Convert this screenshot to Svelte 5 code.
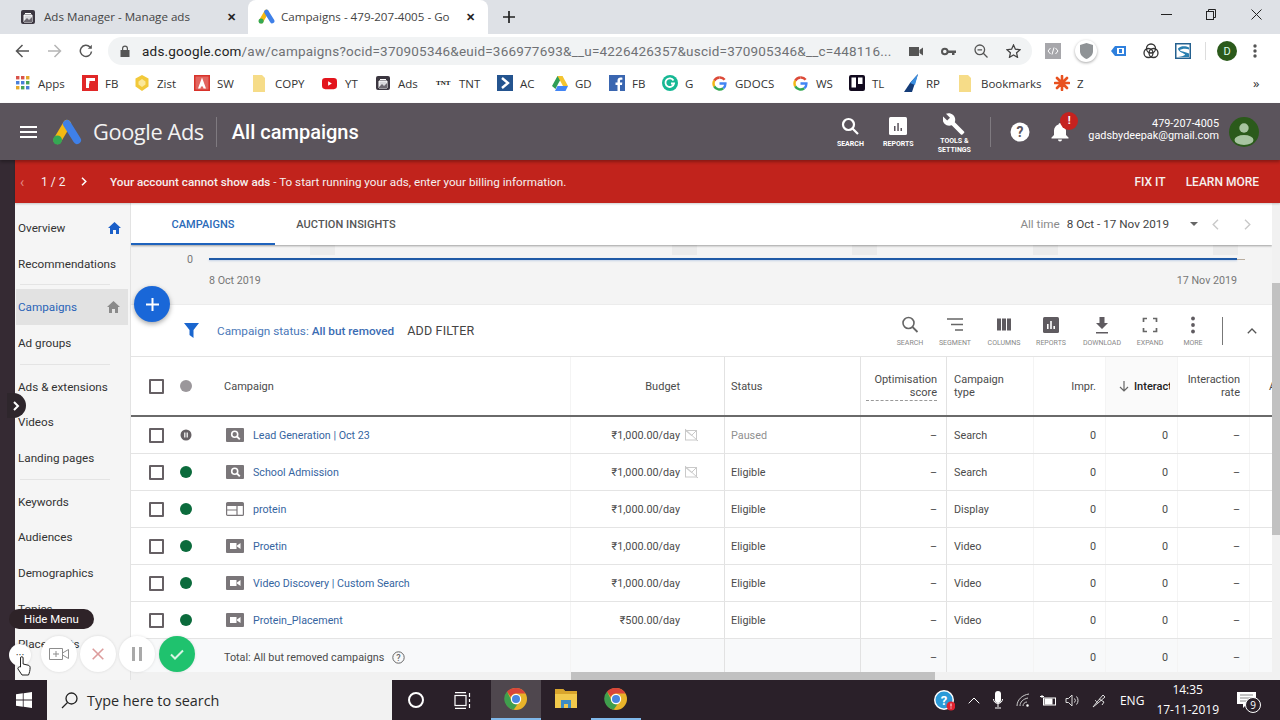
<script>
  const bookmarks = [
    { k: 'apps', t: 'Apps', w: 67 }, { k: 'flip', t: 'FB', w: 52 }, { k: 'zist', t: 'Zist', w: 60 },
    { k: 'sw', t: 'SW', w: 58 }, { k: 'folder', t: 'COPY', w: 70 }, { k: 'yt', t: 'YT', w: 53 },
    { k: 'ads', t: 'Ads', w: 61 }, { k: 'tnt', t: 'TNT', w: 61 }, { k: 'ac', t: 'AC', w: 55 },
    { k: 'gd', t: 'GD', w: 57 }, { k: 'fb', t: 'FB', w: 53 }, { k: 'gram', t: 'G', w: 50 },
    { k: 'g', t: 'GDOCS', w: 81 }, { k: 'g', t: 'WS', w: 56 }, { k: 'trello', t: 'TL', w: 54 },
    { k: 'rp', t: 'RP', w: 55 }, { k: 'folder', t: 'Bookmarks', w: 96 }, { k: 'z', t: 'Z', w: 40 }
  ];
  const nav = [
    { t: 'Overview', home: 'blue' }, { t: 'Recommendations' }, { sep: true },
    { t: 'Campaigns', home: 'gray', active: true }, { t: 'Ad groups' }, { sep: true },
    { t: 'Ads & extensions' }, { t: 'Videos' }, { t: 'Landing pages' }, { sep: true },
    { t: 'Keywords' }, { t: 'Audiences' }, { t: 'Demographics' }, { t: 'Topics' }, { t: 'Placements' }
  ];
  const tools = [
    { k: 'search', t: 'SEARCH', w: 40 }, { k: 'segment', t: 'SEGMENT', w: 50 }, { k: 'columns', t: 'COLUMNS', w: 48 },
    { k: 'reports', t: 'REPORTS', w: 46 }, { k: 'download', t: 'DOWNLOAD', w: 56 }, { k: 'expand', t: 'EXPAND', w: 40 }, { k: 'more', t: 'MORE', w: 46 }
  ];
  const rows = [
    { n: 'Lead Generation | Oct 23', b: '₹1,000.00/day', s: 'Paused', ty: 'Search', ic: 'search', paused: true, warn: true },
    { n: 'School Admission', b: '₹1,000.00/day', s: 'Eligible', ty: 'Search', ic: 'search', warn: true },
    { n: 'protein', b: '₹1,000.00/day', s: 'Eligible', ty: 'Display', ic: 'display' },
    { n: 'Proetin', b: '₹1,000.00/day', s: 'Eligible', ty: 'Video', ic: 'video' },
    { n: 'Video Discovery | Custom Search', b: '₹1,000.00/day', s: 'Eligible', ty: 'Video', ic: 'video' },
    { n: 'Protein_Placement', b: '₹500.00/day', s: 'Eligible', ty: 'Video', ic: 'video' }
  ];
</script>

{#snippet chrome()}
  <svg width="24" height="24" viewBox="0 0 24 24">
    <circle cx="12" cy="12" r="11" fill="#e8b32a"/>
    <path d="M12 1a11 11 0 0 1 9.53 5.5H12a5.5 5.5 0 0 0-5.2 3.6L3 4.6A11 11 0 0 1 12 1z" fill="#d9453a"/>
    <path d="M3 4.6l3.9 7.6a5.5 5.5 0 0 0 6.6 5.1L9.6 22.7A11 11 0 0 1 3 4.6z" fill="#3f9e4d"/>
    <circle cx="12" cy="12" r="5.2" fill="#fff"/><circle cx="12" cy="12" r="4" fill="#4a86e0"/>
  </svg>
{/snippet}

{#snippet adsLogo(w, h)}
  <svg width={w} height={h} viewBox="0 0 30 26">
    <path d="M15 5L5.5 21" stroke="#f4b912" stroke-width="8" stroke-linecap="round"/>
    <path d="M15 5l10 16" stroke="#3f80e8" stroke-width="8" stroke-linecap="round"/>
    <circle cx="5.5" cy="21" r="4.5" fill="#34a853"/>
  </svg>
{/snippet}

{#snippet bag()}
  <svg width="16" height="16" viewBox="0 0 16 16">
    <rect x="1" y="1" width="14" height="14" rx="2" fill="#3b3640"/>
    <path d="M5 4.5h6M4 6h8v7H4z" stroke="#fff" fill="#d8d8dc"/><path d="M4 12l3-3 2 2 3-3v5H4z" fill="#6c6870"/>
  </svg>
{/snippet}

{#snippet gLogo()}
  <svg width="15" height="15" viewBox="0 0 16 16" fill="none" stroke-width="2.6">
    <path d="M13.5 4A6.4 6.4 0 0 0 8 1.6" stroke="#dc4a38"/><path d="M8 1.6A6.4 6.4 0 0 0 2.4 5" stroke="#dc4a38"/>
    <path d="M2.4 5a6.4 6.4 0 0 0 0 6" stroke="#f2b715"/><path d="M2.4 11A6.4 6.4 0 0 0 12 13" stroke="#34a853"/>
    <path d="M12 13a6 6 0 0 0 2.3-5H8" stroke="#4285f4"/>
  </svg>
{/snippet}

{#snippet bm(k)}
  {#if k === 'apps'}
    <svg width="16" height="16" viewBox="0 0 16 16">
      <g fill="#d9534a"><rect x="1" y="1" width="3.4" height="3.4"/><rect x="6" y="1" width="3.4" height="3.4"/></g><rect x="11" y="1" width="3.4" height="3.4" fill="#e5a92c"/>
      <g fill="#4a80d8"><rect x="1" y="6" width="3.4" height="3.4"/><rect x="6" y="6" width="3.4" height="3.4"/></g><rect x="11" y="6" width="3.4" height="3.4" fill="#48a257"/>
      <g fill="#e5a92c"><rect x="1" y="11" width="3.4" height="3.4"/></g><rect x="6" y="11" width="3.4" height="3.4" fill="#48a257"/><rect x="11" y="11" width="3.4" height="3.4" fill="#4a80d8"/>
    </svg>
  {:else if k === 'flip'}
    <svg width="16" height="16" viewBox="0 0 16 16"><rect width="16" height="16" fill="#e12828"/><path d="M4 3h9v3H7.500v2.500H7V13H4z" fill="#fff"/></svg>
  {:else if k === 'zist'}
    <svg width="16" height="16" viewBox="0 0 16 16"><path d="M8 0l6.500 3.500v8L8 16l-6.500-4.500v-8z" fill="#f2c93a"/><path d="M8 4l3.500 2.500v3L8 12 4.500 9.500v-3z" fill="#fbe89a"/></svg>
  {:else if k === 'sw'}
    <svg width="16" height="16" viewBox="0 0 16 16"><rect width="16" height="16" fill="#d8322a"/><rect x="1.500" y="1.500" width="13" height="13" fill="#fff" opacity=".25"/><path d="M8 2.500l4 11h-2.500l-.6-2H7l-.6 2H4z" fill="#fff"/></svg>
  {:else if k === 'folder'}
    <svg width="14" height="17" viewBox="0 0 14 17"><path d="M1 0h9l3 3v14H1z" fill="#f6dc88"/></svg>
  {:else if k === 'yt'}
    <svg width="15" height="15" viewBox="0 0 16 16"><rect y="2" width="16" height="12" rx="3.500" fill="#e3141c"/><path d="M6.500 5.500l4 2.500-4 2.500z" fill="#fff"/></svg>
  {:else if k === 'ads'}
    {@render bag()}
  {:else if k === 'tnt'}
    <span class="tnt">TNT</span>
  {:else if k === 'ac'}
    <svg width="16" height="16" viewBox="0 0 16 16"><rect width="16" height="16" fill="#24548f"/><path d="M5 3l6 5-6 5" fill="none" stroke="#fff" stroke-width="2.400"/></svg>
  {:else if k === 'gd'}
    <svg width="16" height="15" viewBox="0 0 16 15"><path d="M5.500 0h5L6 8 3.500 13 0 10z" fill="#2f9e57"/><path d="M5.500 0h5L16 10h-5z" fill="#f4c430"/><path d="M3 15l2.500-5H16l-2.500 5z" fill="#4285f4"/></svg>
  {:else if k === 'fb'}
    <svg width="16" height="16" viewBox="0 0 16 16"><rect width="16" height="16" fill="#3a66b0"/><path d="M11 16v-6h2l.3-2.400H11V6c0-.8.300-1.200 1.200-1.200h1.200V2.700C13 2.600 12.300 2.600 11.600 2.600 9.800 2.600 8.500 3.700 8.500 5.800v1.800h-2V10h2v6z" fill="#fff"/></svg>
  {:else if k === 'gram'}
    <svg width="16" height="16" viewBox="0 0 16 16"><circle cx="8" cy="8" r="8" fill="#16b894"/><path d="M11.500 5.500A4.300 4.300 0 1 0 12 8.500H9" fill="none" stroke="#fff" stroke-width="1.800"/></svg>
  {:else if k === 'g'}
    {@render gLogo()}
  {:else if k === 'trello'}
    <svg width="16" height="16" viewBox="0 0 16 16"><rect width="16" height="16" rx="2" fill="#120a1e"/><rect x="2.500" y="2.500" width="4.500" height="10" fill="#fff"/><rect x="9" y="2.500" width="4.500" height="6.500" fill="#fff"/></svg>
  {:else if k === 'rp'}
    <svg width="16" height="18" viewBox="0 0 16 18"><path d="M15 0L7 9l-6 9h8z" fill="#143c78"/><path d="M15 0L7 9l5 2z" fill="#3b8ee0"/></svg>
  {:else}
    <svg width="16" height="16" viewBox="0 0 16 16" stroke="#e8511f" stroke-width="2.600" stroke-linecap="round"><path d="M8 1v14M1 8h14M3 3l10 10M13 3L3 13"/></svg>
  {/if}
{/snippet}

{#snippet tool(k)}
  <svg width="20" height="20" viewBox="0 0 20 20" class="tool-ic">
    {#if k === 'search'}
      <circle cx="8.500" cy="8" r="5.500" fill="none" stroke="#666" stroke-width="1.600"/><path d="M12.500 12l5 5" stroke="#666" stroke-width="1.800"/>
    {:else if k === 'segment'}
      <path d="M2 4h16M6 9.500h12M10 15h8" stroke="#666" stroke-width="1.700"/>
    {:else if k === 'columns'}
      <path d="M3 3.500h4v12H3zM8 3.500h4v12H8zM13 3.500h4v12h-4z" fill="#5f5b60"/>
    {:else if k === 'reports'}
      <rect x="2" y="2" width="16" height="16" rx="1.500" fill="#5f5b60"/><path d="M6 9v5h1.600V9zM9.200 6v8h1.600V6zM12.400 11v3H14v-3z" fill="#fff"/>
    {:else if k === 'download'}
      <path d="M7.500 2h5v6h3.500L10 14 4 8h3.500zM4 17h12v1.500H4z" fill="#5f5b60"/>
    {:else if k === 'expand'}
      <path d="M3.500 7V3.500H7M13 3.500h3.500V7M16.500 13v3.500H13M7 16.500H3.500V13" fill="none" stroke="#666" stroke-width="1.700"/>
    {:else}
      <circle cx="10" cy="3.500" r="1.900" fill="#5f5b60"/><circle cx="10" cy="10" r="1.900" fill="#5f5b60"/><circle cx="10" cy="16.500" r="1.900" fill="#5f5b60"/>
    {/if}
  </svg>
{/snippet}

{#snippet typeIcon(k)}
  <svg width="18" height="14" viewBox="0 0 18 14">
    {#if k === 'search'}
      <rect width="18" height="14" rx="1" fill="#7a7679"/><circle cx="8.700" cy="6.300" r="3" fill="none" stroke="#fff" stroke-width="1.600"/><path d="M11 8.500l2.800 2.800" stroke="#fff" stroke-width="1.800"/>
    {:else if k === 'display'}
      <rect x=".6" y=".6" width="16.800" height="12.800" rx="1" fill="#fff" stroke="#7a7679" stroke-width="1.200"/><path d="M1 1h16v3H1z" fill="#7a7679"/><path d="M1 8h10M11 4v9" stroke="#7a7679" stroke-width="1.200"/>
    {:else}
      <rect width="18" height="14" rx="1" fill="#7a7679"/><path d="M4 4h6.500v6H4zM11 6.500L14.500 4v6L11 7.500z" fill="#fff"/>
    {/if}
  </svg>
{/snippet}

{#snippet home(c)}
  <svg width="13" height="12" viewBox="0 0 13 12"><path d="M6.500 0L13 6h-2v6H8V8H5v4H2V6H0z" fill={c}/></svg>
{/snippet}

<div class="page">
  <div class="tabstrip">
    <div class="tab">
      {@render bag()}
      <span class="tab-title">Ads Manager - Manage ads</span>
      <span class="x">✕</span>
    </div>
    <div class="tab active">
      {@render adsLogo(17, 15)}
      <span class="tab-title clip">Campaigns - 479-207-4005 - Go</span>
      <span class="x">✕</span>
    </div>
    <svg class="plus" width="12" height="12" viewBox="0 0 12 12"><path d="M6 0v12M0 6h12" stroke="#222" stroke-width="1.700"/></svg>
    <div class="winctl">
      <svg width="11" height="11" viewBox="0 0 11 11"><path d="M0 5.500h11" stroke="#222"/></svg>
      <svg width="11" height="11" viewBox="0 0 11 11" fill="none" stroke="#222"><rect x=".5" y="2.500" width="7" height="8"/><path d="M2.500 2.500V.5h7v8h-2"/></svg>
      <svg width="11" height="11" viewBox="0 0 11 11"><path d="M.5.500l10 10M10.500.5l-10 10" stroke="#222"/></svg>
    </div>
  </div>

  <div class="toolbar">
    <svg class="tb1" width="14" height="14" viewBox="0 0 14 14" fill="none" stroke="#555" stroke-width="1.500"><path d="M14 7H1.500M7.500 1l-6 6 6 6"/></svg>
    <svg class="tb2" width="14" height="14" viewBox="0 0 14 14" fill="none" stroke="#b5b5b5" stroke-width="1.500"><path d="M0 7h12.500M6.500 1l6 6-6 6"/></svg>
    <svg class="tb3" width="14" height="14" viewBox="0 0 14 14" fill="none" stroke="#555" stroke-width="1.500"><path d="M12.500 7.500A5.600 5.600 0 1 1 11 3"/><path d="M12.800 .8v4h-4" fill="#555" stroke="none"/></svg>
    <div class="omnibox">
      <svg width="10" height="12" viewBox="0 0 10 12"><path d="M2 5V3.500a3 3 0 0 1 6 0V5h1.500v7h-9V5zM3.200 5h3.600V3.500a1.800 1.800 0 0 0-3.600 0z" fill="#555"/></svg>
      <span class="url"><b>ads.google.com</b>/aw/campaigns?ocid=370905346&amp;euid=366977693&amp;__u=4226426357&amp;uscid=370905346&amp;__c=448116...</span>
      <div class="omni-icons">
        <svg width="14" height="11" viewBox="0 0 14 11"><path d="M0 1h10v9H0zM10.500 4L14 1.500v8L10.500 7z" fill="#555"/></svg>
        <svg width="15" height="9" viewBox="0 0 15 9"><circle cx="3.800" cy="4.500" r="2.800" fill="none" stroke="#555" stroke-width="2"/><path d="M6.500 3.500H15V6h-1.500v2H11V6H6.500z" fill="#555"/></svg>
        <svg width="14" height="14" viewBox="0 0 14 14" fill="none" stroke="#555" stroke-width="1.300"><circle cx="5.800" cy="5.800" r="4.800"/><path d="M9.300 9.300L13.500 13.500M3.500 5.800h4.600"/></svg>
        <svg width="15" height="14" viewBox="0 0 15 14"><path d="M7.500 1l1.900 4.200 4.600.5-3.400 3.100.9 4.500-4-2.300-4 2.300.9-4.500L1 5.700l4.600-.5z" fill="none" stroke="#444" stroke-width="1.300"/></svg>
      </div>
    </div>
    <div class="ext">
      <svg width="16" height="16" viewBox="0 0 16 16"><rect width="16" height="16" fill="#a7a7ab"/><path d="M5.500 5L3 8l2.500 3M10.500 5L13 8l-2.500 3M9 4.500l-2 7" fill="none" stroke="#fff"/></svg>
      <span class="shield"><svg width="13" height="16" viewBox="0 0 13 16"><path d="M6.500 0L13 2v6c0 4-3 6.500-6.500 8C3 14.500 0 12 0 8V2z" fill="#8f9396"/></svg></span>
      <svg width="16" height="14" viewBox="0 0 16 14"><path d="M0 7l4-5h11v10H4z" fill="#2f80dd"/><rect x="6" y="4" width="7" height="6" fill="#fff"/><path d="M8 5h3v4H8z" fill="#2f80dd"/></svg>
      <svg width="16" height="16" viewBox="0 0 16 16" fill="none" stroke="#333" stroke-width="1.300"><circle cx="8" cy="5.500" r="4.500"/><circle cx="5.500" cy="10" r="4.500"/><circle cx="10.500" cy="10" r="4.500"/></svg>
      <svg width="16" height="16" viewBox="0 0 16 16"><rect width="16" height="16" fill="#24608f"/><rect x="1.500" y="1.500" width="13" height="13" fill="#fff"/><path d="M3 5.500C6 2.500 11 3 14 4.500v2C11 5 6 6 5 7s6 2 9 3.500V14H3c4-.5 7-1.500 7-2.500S3 9 3 5.500z" fill="#2a7fb0"/></svg>
      <i class="vline"></i>
      <span class="avatar-d">D</span>
      <svg width="4" height="14" viewBox="0 0 4 14"><circle cx="2" cy="2" r="1.700" fill="#555"/><circle cx="2" cy="7" r="1.700" fill="#555"/><circle cx="2" cy="12" r="1.700" fill="#555"/></svg>
    </div>
  </div>

  <div class="bookmarks">
    {#each bookmarks as b}
      <div class="bm" style="width:{b.w}px">
        <span class="bm-ic">{@render bm(b.k)}</span>
        <span>{b.t}</span>
      </div>
    {/each}
    <span class="bm-more">»</span>
  </div>

  <header class="adsbar">
    <svg class="burger" width="17" height="12" viewBox="0 0 17 12"><path d="M0 1h17M0 6h17M0 11h17" stroke="#fff" stroke-width="2"/></svg>
    <span class="logo">{@render adsLogo(30, 26)}</span>
    <span class="brand">Google Ads</span>
    <i class="brand-sep"></i>
    <span class="page-title">All campaigns</span>
    <div class="hdr-right">
      <div class="hdr-btn">
        <svg width="18" height="18" viewBox="0 0 18 18" fill="none" stroke="#fff" stroke-width="2.200"><circle cx="7.500" cy="7.500" r="5.500"/><path d="M11.500 11.500l5.500 5.500"/></svg>
        <span>SEARCH</span>
      </div>
      <div class="hdr-btn">
        <svg width="18" height="18" viewBox="0 0 18 18"><rect width="18" height="18" rx="1.500" fill="#fff"/><path d="M5 9v5h1.500V9zM8.300 6v8h1.500V6zM11.500 11v3H13v-3z" fill="#5a535b"/></svg>
        <span>REPORTS</span>
      </div>
      <div class="hdr-btn tools">
        <svg width="22" height="22" viewBox="0 0 22 22"><path d="M21 18.500L11.800 9.300C12.700 6.700 12.200 3.900 10.100 2 8.100 .1 5.200-.2 3 .8l4 4-2.800 2.800-4.100-4C-.9 5.800-.4 8.700 1.500 10.700c2 2 4.700 2.400 7.200 1.500l9.200 9.200c.4.400 1.100.4 1.500 0l1.600-1.500c.4-.5.400-1.100 0-1.400z" fill="#fff"/></svg>
        <span>TOOLS &amp;<br>SETTINGS</span>
      </div>
      <i class="hdr-sep"></i>
      <svg class="help" width="20" height="20" viewBox="0 0 20 20"><circle cx="10" cy="10" r="9.500" fill="#fff"/><text x="10" y="15" text-anchor="middle" class="help-q">?</text></svg>
      <span class="bell">
        <svg width="18" height="20" viewBox="0 0 18 20"><path d="M9 1a1.500 1.500 0 0 1 1.500 1.500C13 3.300 15 5.500 15 8.500V13l2.500 2.500v1H.5v-1L3 13V8.500c0-3 2-5.200 4.500-6A1.500 1.500 0 0 1 9 1zM7 17.500h4a2 2 0 0 1-4 0z" fill="#fff"/></svg>
        <b class="badge">!</b>
      </span>
      <div class="acct">
        <span>479-207-4005</span>
        <span>gadsbydeepak@gmail.com</span>
      </div>
      <svg class="acct-ava" width="30" height="30" viewBox="0 0 30 30"><circle cx="15" cy="15" r="15" fill="#2b5a1b"/><circle cx="15" cy="11" r="4.700" fill="#a7c4a0"/><ellipse cx="15" cy="23" rx="9.500" ry="5" fill="#a7c4a0"/></svg>
    </div>
  </header>

  <div class="workspace">
    <div class="railbar"></div>
    <div class="content">
      <div class="banner">
        <span class="pg-prev">‹</span>
        <span class="pg">1 / 2</span>
        <svg class="pg-next" width="6" height="9" viewBox="0 0 6 9"><path d="M1 .8l3.800 3.700L1 8.200" fill="none" stroke="#fff" stroke-width="1.500"/></svg>
        <span class="msg"><b>Your account cannot show ads</b> - To start running your ads, enter your billing information.</span>
        <span class="act">FIX IT</span>
        <span class="act">LEARN MORE</span>
      </div>
      <div class="body">
        <nav class="sidebar">
          {#each nav as n}
            {#if n.sep}
              <div class="nav-sep"><i></i></div>
            {:else}
              <div class="nav-item" class:active={n.active}>
                <span>{n.t}</span>
                {#if n.home}{@render home(n.home === 'blue' ? '#1a5fc8' : '#8a8a8a')}{/if}
              </div>
            {/if}
          {/each}
        </nav>
        <main class="main">
          <div class="tabs">
            <div class="mtab on">CAMPAIGNS</div>
            <div class="mtab">AUCTION INSIGHTS</div>
            <div class="dates">
              <span class="alltime">All time</span>
              <span class="range">8 Oct - 17 Nov 2019</span>
              <svg class="d-caret" width="8" height="4" viewBox="0 0 8 4"><path d="M0 0h8L4 4z" fill="#666"/></svg>
              <svg class="d-prev" width="7" height="11" viewBox="0 0 7 11"><path d="M6 .8L1.200 5.500 6 10.200" fill="none" stroke="#c9c9c9" stroke-width="1.400"/></svg>
              <svg class="d-next" width="7" height="11" viewBox="0 0 7 11"><path d="M1 .8l4.800 4.700L1 10.200" fill="none" stroke="#c9c9c9" stroke-width="1.400"/></svg>
            </div>
          </div>
          <div class="chart">
            <div class="axis"><span class="zero">0</span><i class="line"></i><i class="tail"></i></div>
            <div class="axis-labels"><span>8 Oct 2019</span><span>17 Nov 2019</span></div>
          </div>
          <div class="filterbar">
            <svg class="funnel" width="15" height="15" viewBox="0 0 15 15"><path d="M0 0h15L9.500 7v8l-4-3V7z" fill="#1a66cf"/></svg>
            <span class="fl">Campaign status: <b>All but removed</b></span>
            <span class="addf">ADD FILTER</span>
            <div class="tools-row">
              {#each tools as t}
                <div class="t-btn" style="width:{t.w}px">{@render tool(t.k)}<span>{t.t}</span></div>
              {/each}
              <i class="t-sep"></i>
              <svg class="t-up" width="10" height="6" viewBox="0 0 10 6"><path d="M.8 5.200L5 1l4.200 4.200" fill="none" stroke="#555" stroke-width="1.300"/></svg>
            </div>
          </div>

          <div class="table">
            <div class="tr head">
              <div class="c c-name">
                <i class="cb"></i><i class="dot gray"></i><span class="h-camp">Campaign</span>
              </div>
              <div class="c r lined budget">Budget</div>
              <div class="c lined strong st">Status</div>
              <div class="c r strong"><span class="opt">Optimisation<br>score</span></div>
              <div class="c strong">Campaign<br>type</div>
              <div class="c r lined">Impr.</div>
              <div class="c r lined sorted">
                <svg width="10" height="11" viewBox="0 0 10 11"><path d="M5 0v10M1 6l4 4 4-4" fill="none" stroke="#666" stroke-width="1.200"/></svg>
                <b>Interact</b>
              </div>
              <div class="c r lined">Interaction<br>rate</div>
              <div class="c lined clipA">A</div>
            </div>
            {#each rows as r}
              <div class="tr">
                <div class="c c-name">
                  <i class="cb"></i>
                  {#if r.paused}
                    <svg class="dot-svg" width="12" height="12" viewBox="0 0 12 12"><circle cx="6" cy="6" r="5.500" fill="#666064"/><path d="M4.200 3.500h1.200v5H4.200zM6.600 3.500h1.200v5H6.600z" fill="#fff"/></svg>
                  {:else}
                    <i class="dot green"></i>
                  {/if}
                  <span class="ty-ic">{@render typeIcon(r.ic)}</span>
                  <span class="link">{r.n}</span>
                </div>
                <div class="c r lined budget">
                  {r.b}
                  <svg class="nofund" class:hidden={!r.warn} width="15" height="14" viewBox="0 0 15 14" fill="none" stroke="#c9c9c9"><rect x="1.500" y="2.500" width="11" height="9.500"/><path d="M1.500 2.500l6 5 5-5M1 1l13 12"/></svg>
                </div>
                <div class="c lined strong st" class:muted={r.paused}>{r.s}</div>
                <div class="c r strong">–</div>
                <div class="c strong">{r.ty}</div>
                <div class="c r lined">0</div>
                <div class="c r lined">0</div>
                <div class="c r lined">–</div>
                <div class="c lined"></div>
              </div>
            {/each}
            <div class="tr total">
              <div class="c c-name">
                <span class="tot">Total: All but removed campaigns</span>
                <svg class="tot-q" width="13" height="13" viewBox="0 0 13 13"><circle cx="6.500" cy="6.500" r="5.700" fill="none" stroke="#666"/><text x="6.500" y="9.700" text-anchor="middle" class="q-small">?</text></svg>
              </div>
              <div class="c lined"></div>
              <div class="c lined strong"></div>
              <div class="c r strong">–</div>
              <div class="c strong"></div>
              <div class="c r lined">0</div>
              <div class="c r lined">0</div>
              <div class="c r lined">–</div>
              <div class="c lined"></div>
            </div>
          </div>
          <div class="hscroll"><i></i></div>
        </main>
        <div class="vscroll"><i></i></div>
      </div>
    </div>
  </div>

  <footer class="taskbar">
    <svg class="win" width="16" height="16" viewBox="0 0 16 16"><path d="M0 2.300l6.800-1v6.300H0zM7.600 1.200L16 0v7.600H7.600zM0 8.400h6.800v6.300L0 13.700zM7.600 8.400H16V16l-8.400-1.200z" fill="#fff"/></svg>
    <div class="tsearch">
      <svg width="17" height="17" viewBox="0 0 17 17" fill="none" stroke="#222" stroke-width="1.300"><circle cx="10.500" cy="6.500" r="5.500"/><path d="M6.500 10.500L1 16"/></svg>
      <span>Type here to search</span>
    </div>
    <i class="cortana"></i>
    <svg class="taskview" width="17" height="17" viewBox="0 0 17 17" fill="none" stroke="#fff" stroke-width="1.200"><path d="M1 .6h11M1 16.400h11"/><rect x="1" y="3.500" width="11" height="10"/><path d="M15.500 1v4M15.500 7v3M15.500 12v4"/></svg>
    <div class="tb-app current">{@render chrome()}</div>
    <div class="tb-app plain">
      <svg width="24" height="22" viewBox="0 0 24 22"><path d="M1 1h8l2 2h12v17H1z" fill="#f2c94c"/><path d="M1 1h8l2 2h12v3H1z" fill="#d9a52c"/><path d="M7 12h10v8h-3v-4h-4v4H7z" fill="#3d8cc4"/></svg>
    </div>
    <div class="tb-app open">{@render chrome()}</div>
    <div class="tray">
      <span class="t-help"><svg width="22" height="22" viewBox="0 0 22 22"><circle cx="11" cy="11" r="10" fill="#fff"/><circle cx="11" cy="11" r="8.500" fill="#2b9ad8"/><text x="11" y="16" text-anchor="middle" class="t-q">?</text><circle cx="18" cy="17" r="4.500" fill="#e02330"/><path d="M18 14.500v3M18 18.500v1" stroke="#fff"/></svg></span>
      <svg class="t1" width="12" height="7" viewBox="0 0 12 7"><path d="M.7 6.300L6 1l5.300 5.300" fill="none" stroke="#fff"/></svg>
      <svg class="t2" width="10" height="18" viewBox="0 0 10 18"><rect x="2" y="0" width="6" height="12" rx="3" fill="#fff"/><path d="M.5 8a4.500 4.500 0 0 0 9 0M5 13v3M2 17h6" fill="none" stroke="#fff"/></svg>
      <svg class="t3" width="15" height="14" viewBox="0 0 15 14" fill="none" stroke="#ccc"><path d="M1 13C1 7 6 2 13 1M4 13c0-4 3-7 8-8M7 13c0-2 1.500-4 4-4"/><circle cx="11.500" cy="12.500" r="1" fill="#fff"/></svg>
      <svg class="t4" width="17" height="11" viewBox="0 0 17 11" fill="none" stroke="#fff"><path d="M0 1.500h4M2 0v3"/><rect x="3.500" y="3" width="12" height="7"/><rect x="5" y="4" width="7" height="5" fill="#fff"/></svg>
      <svg class="t5" width="15" height="13" viewBox="0 0 15 13" fill="none" stroke="#ddd"><path d="M1 4.500h2.500L7 1v11L3.500 8.500H1zM9.500 4.500a3 3 0 0 1 0 4M11.500 2.500a6 6 0 0 1 0 8"/></svg>
      <svg class="t6" width="14" height="15" viewBox="0 0 14 15" fill="none" stroke="#ddd"><path d="M1 14l4-5 6-7 2 2-7 6zM7 6l5 3-2 3M3 7c1 1 2 2 2 3"/></svg>
      <span class="eng">ENG</span>
      <div class="clock"><span>14:35</span><span>17-11-2019</span></div>
      <span class="notif">
        <svg width="19" height="17" viewBox="0 0 19 17"><path d="M0 0h19v12h-9l-4 4v-4H0z" fill="#fff"/><path d="M3 3h13M3 6h13M3 9h8" stroke="#888"/></svg>
        <b>9</b>
      </span>
    </div>
  </footer>

  <div class="fab"><svg width="13" height="13" viewBox="0 0 13 13"><path d="M6.500 0v13M0 6.500h13" stroke="#fff" stroke-width="2"/></svg></div>
  <div class="expander"><svg width="7" height="10" viewBox="0 0 7 10"><path d="M1 1l4 4-4 4" fill="none" stroke="#fff" stroke-width="2"/></svg></div>
  <div class="hidemenu">Hide Menu</div>
  <div class="rec r0"><span>···</span></div>
  <div class="rec r1"><svg width="20" height="14" viewBox="0 0 20 14" fill="none" stroke="#8d8d8d"><path d="M.5 1.500h13v11H.500zM13.500 6l6-3.500v9l-6-3.500M7 4v6M4 7h6"/></svg></div>
  <div class="rec r2"><svg width="12" height="12" viewBox="0 0 12 12"><path d="M.7.700l10.600 10.600M11.300.7L.7 11.300" stroke="#dc9c9c" stroke-width="1.600"/></svg></div>
  <div class="rec r3"><svg width="10" height="14" viewBox="0 0 10 14"><path d="M0 0h3v14H0zM7 0h3v14H7z" fill="#a9a9a9"/></svg></div>
  <div class="rec r4"><svg width="14" height="11" viewBox="0 0 14 11"><path d="M1 5.500l4 4 8-8" fill="none" stroke="#d8f5e4" stroke-width="2"/></svg></div>
  <svg class="hand" width="14" height="20" viewBox="0 0 14 20"><path d="M3.500 11V2a1.300 1.300 0 0 1 2.600 0v6l5 1.200c1.300.3 2 1.200 2 2.300 0 3-.6 5-1.600 7.500H5L1 13c-.8-1.100 1.200-2.800 2.500-2z" fill="#fff" stroke="#222"/></svg>
</div>

<style>
  :global(body) { margin: 0; background: #fff; }
  .page { width: 1280px; height: 720px; position: relative; overflow: hidden; display: flex; flex-direction: column; font-family: Roboto, "Liberation Sans", sans-serif; color: #3c3c3c; }
  i { display: block; font-style: normal; }

  .tabstrip { height: 34px; background: #dee1e6; display: flex; align-items: center; flex: none; position: relative; }
  .tab { height: 34px; width: 246px; box-sizing: border-box; display: flex; align-items: center; padding: 0 0 1px 20px; gap: 8px; position: relative; font-family: "Open Sans", sans-serif; font-size: 11.600px; color: #444; }
  .tab.active { background: #fff; border-radius: 8px 8px 0 0; margin-left: 2px; padding-left: 10px; width: 240px; }
  .tab-title { white-space: nowrap; }
  .tab-title.clip { width: 172px; overflow: hidden; margin-left: -2px; }
  .x { position: absolute; right: 10px; font-size: 11px; font-weight: 700; color: #222; }
  .tab.active .x { right: 13px; }
  .plus { margin-left: 15px; }
  .winctl { margin-left: auto; display: flex; gap: 34px; padding-right: 18px; margin-top: -6px; }

  .toolbar { height: 34px; flex: none; background: #fff; display: flex; align-items: center; position: relative; }
  .tb1 { margin-left: 15px; } .tb2 { margin-left: 19px; } .tb3 { margin-left: 17px; }
  .omnibox { margin-left: 15px; width: 924px; height: 28px; border-radius: 14px; background: #f1f3f4; display: flex; align-items: center; box-sizing: border-box; padding-left: 12px; }
  .url { margin-left: 12px; font-size: 13.500px; color: #6f7174; white-space: nowrap; width: 752px; overflow: hidden; letter-spacing: .21px; }
  .url b { font-weight: 400; color: #222; }
  .omni-icons { display: flex; align-items: center; gap: 18px; margin-left: 15px; }
  .ext { display: flex; align-items: center; margin-left: 13px; gap: 16px; flex: 1; }
  .shield { width: 22px; height: 22px; margin: 0 -2px; border-radius: 50%; background: #fff; box-shadow: 0 1px 3px rgba(0,0,0,.35); display: flex; align-items: center; justify-content: center; }
  .vline { width: 1px; height: 18px; background: #ddd; margin-left: -2px; }
  .avatar-d { width: 20px; height: 20px; border-radius: 50%; background: #2b5a1b; color: #dfe; font-size: 11px; display: flex; align-items: center; justify-content: center; margin-left: -5px; }

  .bookmarks { height: 35px; box-sizing: border-box; padding: 0 0 5px 15px; flex: none; background: #fff; display: flex; align-items: center; font-family: "Open Sans", sans-serif; font-size: 11.500px; color: #333; position: relative; }
  .bm { display: flex; align-items: center; flex: none; white-space: nowrap; }
  .bm-ic { width: 23px; display: flex; align-items: center; flex: none; }
  .tnt { font-family: "Liberation Serif", serif; font-size: 7px; font-weight: 700; color: #111; }
  .bm-more { position: absolute; left: 1253px; font-size: 13px; }

  .adsbar { height: 57px; flex: none; background: #5b545c; color: #fff; display: flex; align-items: center; position: relative; z-index: 2; box-shadow: 0 2px 3px rgba(0,0,0,.3); }
  .burger { margin-left: 20px; }
  .logo { display: flex; margin-left: 15px; }
  .brand { margin-left: 11px; font-family: "Open Sans", sans-serif; font-size: 21.800px; letter-spacing: -.4px; color: #f2f2f2; }
  .brand-sep { width: 1px; height: 30px; background: #7f7a80; margin-left: 12px; }
  .page-title { margin-left: 15px; font-size: 20px; font-weight: 500; }
  .hdr-right { margin-left: auto; display: flex; align-items: center; padding-right: 21px; }
  .hdr-btn { width: 48px; display: flex; flex-direction: column; align-items: center; gap: 5px; margin-top: 2px; font-size: 7px; font-weight: 700; text-align: center; line-height: 9px; }
  .hdr-btn.tools { width: 64px; margin-top: 5px; gap: 2px; }
  .hdr-sep { width: 1px; height: 30px; background: #7f7a80; margin-left: 4px; }
  .help { margin-left: 19px; }
  .help-q { font: 700 14px Roboto, sans-serif; fill: #5b545c; }
  .bell { margin-left: 21px; position: relative; display: flex; }
  .badge { position: absolute; left: 9px; top: -10px; width: 18px; height: 18px; border-radius: 50%; background: #c5221f; color: #fff; font-size: 11px; text-align: center; line-height: 18px; }
  .acct { margin-left: 19px; display: flex; flex-direction: column; align-items: flex-end; font-size: 10.850px; line-height: 12px; margin-top: -3px; }
  .acct-ava { margin-left: 10px; }

  .workspace { flex: 1; display: flex; min-height: 0; }
  .railbar { width: 15px; background: #352a33; flex: none; }
  .content { flex: 1; display: flex; flex-direction: column; min-width: 0; }
  .banner { height: 43px; flex: none; background: #c1231c; color: #f5f0ef; display: flex; align-items: center; font-size: 12px; box-shadow: 0 1px 2px rgba(0,0,0,.2); position: relative; z-index: 1; }
  .pg-prev { margin-left: 5px; color: #e48a84; font-size: 14px; width: 21px; }
  .pg { width: 40px; }
  .pg-next { margin-right: 23px; }
  .msg { margin-right: auto; font-size: 11.700px; }
  .msg b { font-weight: 500; }
  .act { font-weight: 500; margin-left: 20px; }
  .act:last-child { margin-right: 21px; }

  .body { flex: 1; display: flex; min-height: 0; }
  .sidebar { width: 116px; flex: none; background: #f5f5f5; padding-top: 7px; box-sizing: border-box; overflow: hidden; border-right: 1px solid #e3e3e3; position: relative; }
  .nav-item { height: 35.700px; display: flex; align-items: center; justify-content: space-between; padding: 0 9px 0 3px; font-size: 11.700px; color: #333; }
  .nav-item.active { background: #e2e2e2; color: #2a64b8; margin-left: 1px; margin-right: 2px; padding-left: 2px; padding-right: 8px; }
  .nav-sep { height: 8px; padding: 3px 20px 0 5px; box-sizing: border-box; }
  .nav-sep i { height: 1px; background: #e4e4e4; }

  .main { flex: 1; min-width: 0; display: flex; flex-direction: column; background: #fff; position: relative; overflow: hidden; }
  .tabs { height: 42px; flex: none; display: flex; align-items: center; box-shadow: 0 1px 2px rgba(0,0,0,.35); position: relative; z-index: 1; font-size: 11px; font-weight: 500; color: #555; }
  .mtab { height: 42px; width: 144px; display: flex; align-items: center; justify-content: center; box-sizing: border-box; letter-spacing: .05px; }
  .mtab + .mtab { width: 142px; }
  .mtab.on { color: #2a6ab8; border-bottom: 2px solid #1f63bd; padding-top: 2px; }
  .dates { margin-left: auto; display: flex; align-items: center; font-size: 11.700px; font-weight: 400; }
  .alltime { color: #8a8a8a; margin-right: 7px; }
  .range { color: #444; }
  .d-caret { margin-left: 21px; } .d-prev { margin-left: 14px; } .d-next { margin-left: 25px; margin-right: 21px; }

  .chart { height: 60px; flex: none; box-sizing: border-box; padding-top: 8px; border-bottom: 1px solid #ececec; font-size: 10.700px; color: #777; background-color: #f4f4f4; background-image: linear-gradient(#ebebeb, #ebebeb), linear-gradient(#ebebeb, #ebebeb), linear-gradient(#ebebeb, #ebebeb), linear-gradient(#ebebeb, #ebebeb), linear-gradient(#ebebeb, #ebebeb); background-repeat: no-repeat; background-size: 25px 10px; background-position: 179px 0, 541px 0, 721px 0, 902px 0, 1082px 0; }
  .axis { display: flex; align-items: center; height: 12px; padding-left: 56px; position: relative; }
  .zero { width: 22px; }
  .axis .line { width: 1028px; height: 2px; background: #1f5aa6; box-shadow: 0 1px 2px rgba(80,130,200,.3); }
  .axis .tail { width: 8px; height: 1px; background: #b9ad9f; }
  .axis-labels { display: flex; justify-content: space-between; padding: 9px 35px 0 78px; }

  .filterbar { height: 52px; flex: none; display: flex; align-items: center; border-bottom: 1px solid #e4e4e4; box-sizing: border-box; padding-left: 53px; font-size: 11.750px; }
  .fl { margin-left: 18px; color: #4a78b8; }
  .fl b { font-weight: 500; color: #3b6cb3; }
  .addf { margin-left: 13px; color: #444; letter-spacing: .2px; font-size: 12.500px; }
  .tools-row { margin-left: auto; display: flex; align-items: center; padding-right: 15px; }
  .t-btn { display: flex; flex-direction: column; align-items: center; font-size: 7px; color: #888; gap: 4px; margin-top: 1px; }
  .tool-ic { display: block; }
  .t-sep { width: 1px; height: 28px; background: #777; margin-left: 6px; }
  .t-up { margin-left: 24px; }

  .table { display: flex; flex-direction: column; font-size: 10.800px; color: #4b4b4b; }
  .tr { display: grid; grid-template-columns: 439px 154px 136px 86px 87px 72px 72px 72px 24px; height: 37px; box-sizing: border-box; border-bottom: 1px solid #e4e4e4; background: #fff; }
  .tr.head { height: 60px; border-bottom: 2px solid #6a6a6a; font-size: 11px; }
  .c { display: flex; align-items: center; box-sizing: border-box; padding: 0 7px; min-width: 0; line-height: 13px; white-space: nowrap; overflow: hidden; }
  .r { justify-content: flex-end; text-align: right; padding-right: 9px; }
  .st { padding-left: 6px; }
  .lined { border-left: 1px solid #f4f4f4; }
  .strong { border-left: 1px solid #e2e2e2; }
  .c-name { padding: 0; }
  .cb { width: 11px; height: 11px; border: 2px solid #666064; border-radius: 1px; margin-left: 18px; flex: none; }
  .dot { width: 12px; height: 12px; border-radius: 50%; margin-left: 16px; flex: none; }
  .dot-svg { margin-left: 16px; flex: none; }
  .dot.green { background: #0b6b3c; }
  .dot.gray { background: #9b979b; }
  .h-camp { margin-left: 32px; }
  .ty-ic { margin-left: 34px; width: 27px; display: flex; flex: none; }
  .link { color: #36659f; font-size: 10.700px; }
  .opt { border-bottom: 1px dashed #999; padding-left: 8px; padding-bottom: 1px; margin-top: 2px; }
  .sorted { gap: 5px; background: #fafafa; padding-right: 7px; }
  .sorted b { font-weight: 500; color: #222; width: 36px; overflow: hidden; }
  .clipA { padding-left: 19px; }
  .budget { padding-right: 44px; position: relative; }
  .nofund { position: absolute; right: 25px; top: 11px; }
  .hidden { display: none; }
  .muted { color: #8f8f8f; }
  .total { background: #f8f9fa; border-bottom: 0; }
  .total .c { background: #f8f9fa; }
  .tot { margin-left: 93px; color: #4b4b4b; }
  .tot-q { margin-left: 8px; }
  .q-small { font: 500 9px Roboto, sans-serif; fill: #666; }
  .hscroll { position: absolute; left: 0; right: 0; bottom: 0; height: 8px; background: #f1f1f1; }
  .hscroll i { margin-left: 440px; width: 364px; height: 8px; background: #c1c1c1; }
  .vscroll { width: 8px; flex: none; background: #f1f1f1; padding-top: 80px; box-sizing: border-box; }
  .vscroll i { height: 252px; background: #c1c1c1; }

  .taskbar { height: 40px; flex: none; background: #2a2029; display: flex; align-items: center; color: #fff; position: relative; }
  .win { margin-left: 16px; }
  .tsearch { margin-left: 15px; width: 345px; height: 40px; background: #f2f2f2; display: flex; align-items: center; color: #2a2a2a; font-size: 14.400px; font-family: "Open Sans", sans-serif; box-sizing: border-box; padding-left: 14px; gap: 9px; }
  .cortana { width: 12px; height: 12px; border: 2.500px solid #fff; border-radius: 50%; margin-left: 16px; }
  .taskview { margin-left: 30px; }
  .tb-app { height: 40px; width: 50px; display: flex; align-items: center; justify-content: center; box-sizing: border-box; border-bottom: 2px solid transparent; }
  .tb-app.current { margin-left: 20px; background: #4f474e; border-bottom-color: #80b8ea; }
  .tb-app.open { border-bottom-color: #80b8ea; margin-left: 0; }
  .tray { margin-left: auto; display: flex; align-items: center; padding-right: 24px; font-size: 12px; font-family: "Open Sans", sans-serif; }
  .t-help { display: flex; margin-right: 13px; }
  .t-q { font: 700 13px Roboto, sans-serif; fill: #fff; }
  .t1 { margin-right: 13px; } .t2 { margin-right: 13px; } .t3 { margin-right: 9px; } .t4 { margin-right: 8px; } .t5 { margin-right: 12px; } .t6 { margin-right: 14px; }
  .eng { margin-right: 12px; }
  .clock { display: flex; flex-direction: column; align-items: center; line-height: 20px; margin-right: 18px; font-size: 12px; }
  .notif { position: relative; display: flex; }
  .notif b { position: absolute; left: 8px; top: 5px; width: 14px; height: 14px; border-radius: 50%; border: 1px solid #fff; background: #2a2029; font-size: 10px; font-weight: 500; text-align: center; line-height: 14px; }

  .fab { position: absolute; left: 134px; top: 286px; width: 36px; height: 36px; border-radius: 50%; background: #1967d8; box-shadow: 0 2px 5px rgba(0,0,0,.35); display: flex; align-items: center; justify-content: center; }
  .expander { position: absolute; left: 7px; top: 393px; width: 19px; height: 25px; border-radius: 0 13px 13px 0; background: #2e262c; display: flex; align-items: center; justify-content: center; }
  .hidemenu { position: absolute; left: 9px; top: 609px; width: 85px; height: 20px; border-radius: 10px; background: #2e2328; color: #fff; font-size: 11.400px; box-sizing: border-box; padding-left: 15px; line-height: 20px; }
  .rec { position: absolute; border-radius: 50%; background: #fff; width: 36px; height: 36px; top: 636px; display: flex; align-items: center; justify-content: center; box-shadow: 0 0 3px rgba(0,0,0,.12); }
  .r0 { left: 9px; top: 644px; width: 22px; height: 22px; font-size: 11px; color: #333; }
  .r1 { left: 41px; } .r2 { left: 80px; } .r3 { left: 119px; }
  .r4 { left: 159px; background: #1fc26e; }
  .hand { position: absolute; left: 17px; top: 656px; }
</style>
